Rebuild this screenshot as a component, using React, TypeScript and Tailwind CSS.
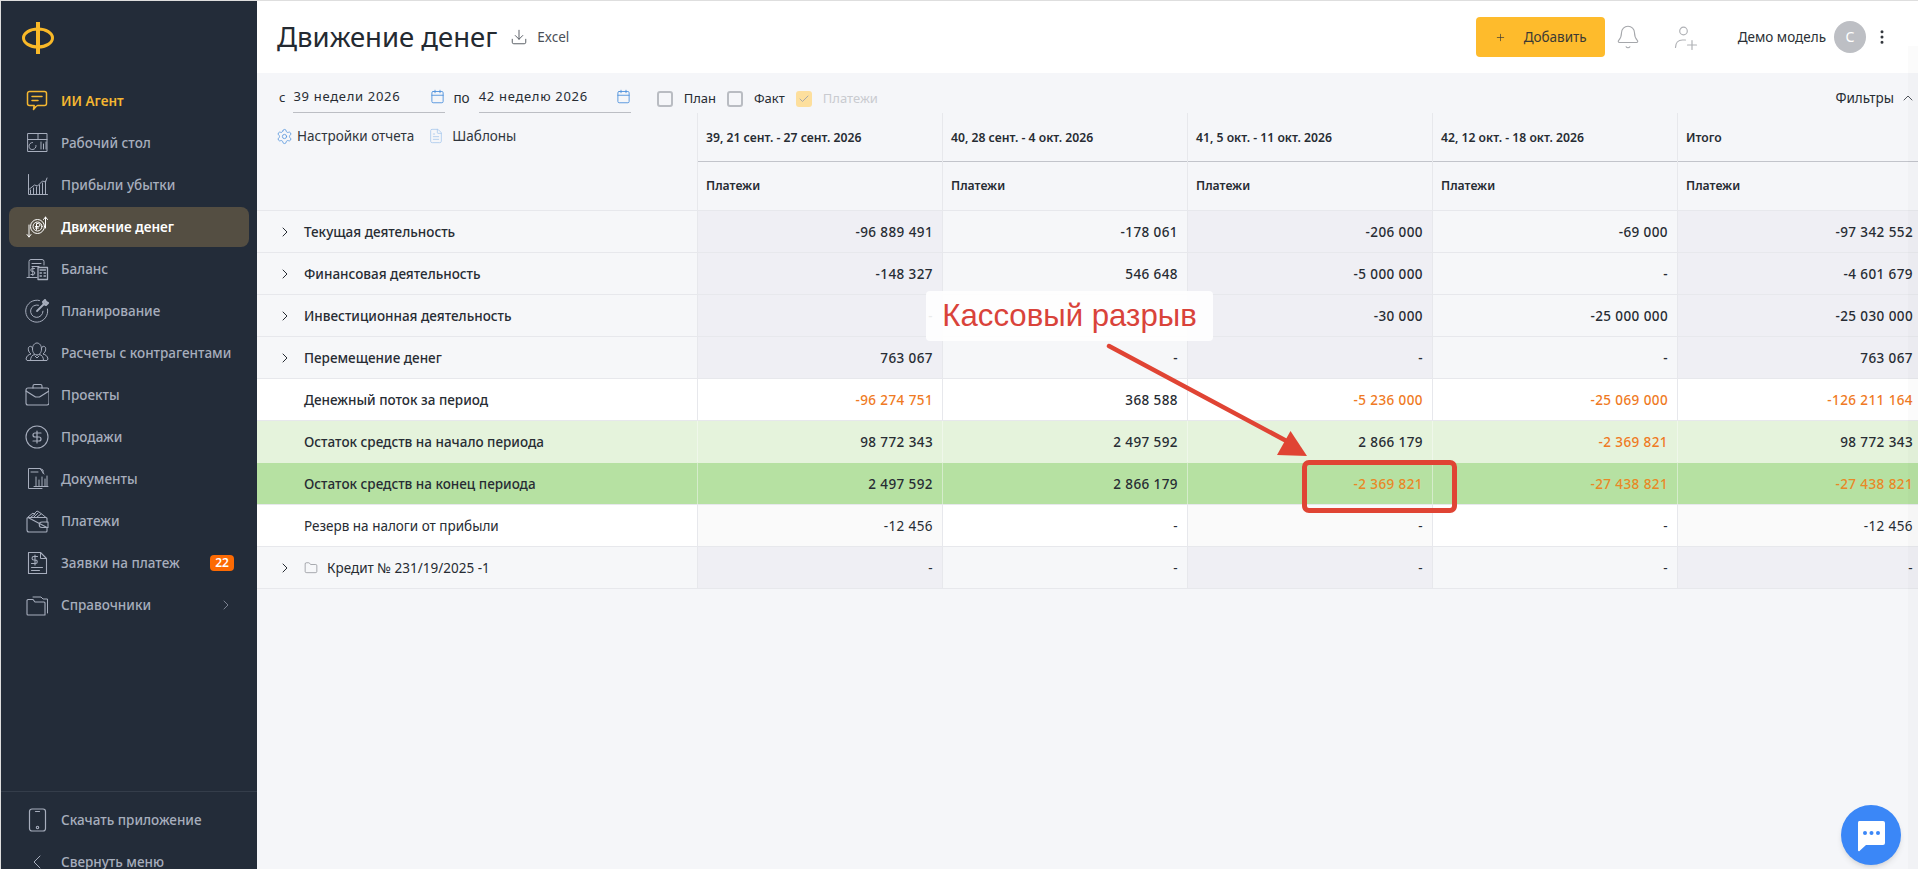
import { Bell, Calendar, Check, ChevronLeft, ChevronRight, ChevronUp, Download, EllipsisVertical, FileText, Folder, Plus, Settings } from "lucide-react";
import type { ReactNode } from "react";

const svg = (children: ReactNode) => (
  <svg viewBox="0 0 24 24" fill="none" stroke="currentColor" strokeWidth="1" strokeLinecap="round" strokeLinejoin="round" className="w-6 h-6">
    {children}
  </svg>
);

const icons: Record<string, ReactNode> = {
  agent: svg(
    <>
      <path strokeWidth="1.5" d="M4.500 2.500h15a2 2 0 0 1 2 2v10a2 2 0 0 1-2 2h-7l-1.500 1-2.500 3 .7-4H4.500a2 2 0 0 1-2-2v-10a2 2 0 0 1 2-2z" />
      <path strokeWidth="1.5" d="M7 7.500h10M7 11.500h6" />
    </>
  ),
  desk: svg(
    <>
      <path d="M3 2.500h19v18H3zM3 8.500h19M13 2.500v6M16 11v7M18.500 13v5M21 11v7" />
      <path d="M11 14.500a3.500 3.500 0 1 1-3.500-3" />
    </>
  ),
  profit: svg(
    <>
      <path d="M3.500 1.500v20h19M5.500 21v-4M8.500 21v-6M11.500 21v-7M14.500 21v-9M17.500 21v-11M20.500 21v-13" />
      <path d="M4.500 16l5-4 3 1 5-5 3 1 1.500-4" />
    </>
  ),
  money: svg(
    <>
      <circle cx="12.500" cy="11.500" r="7" />
      <circle cx="12.500" cy="11.500" r="4.500" />
      <path d="M11.500 14.500v-6h2a1.500 1.500 0 0 1 0 3h-3M10.500 13h3" />
      <path d="M20.500 13V2M18.500 4.500l2-2.500 2 2.500M4 10v12M2 19.500 4 22l2-2.500" />
    </>
  ),
  balance: svg(
    <>
      <path d="M4 20V4.500a2 2 0 0 1 2-2h11a2 2 0 0 1 2 2V8M2 20.500h10M7 6.500h9M7 9.500h7" />
      <path strokeWidth="1.300" d="M13 10.500h9.500v12H13zM15 13h5.500M15 16h1.500M19 16h1.500M15 19h1.500M19 19h1.500" />
      <path d="M9.500 11.500H7.300a1.200 1.200 0 0 0 0 3h1a1.200 1.200 0 0 1 0 3H6M7.800 10.500v8" />
    </>
  ),
  plan: svg(
    <>
      <path d="M14.500 1.500A11 11 0 1 0 22.500 10" />
      <path d="M13.500 6.200a6.200 6.200 0 1 0 4.500 6" />
      <path strokeWidth="1.800" d="M12 12 21 3" />
      <path strokeWidth="2" d="M18 3l2-2 1 2 2 1-2 2-2-1z" />
    </>
  ),
  partners: svg(
    <>
      <path d="M12 14c-2.500 0-4.500-2.500-4.500-6S9.500 2 12 2s4.500 2.500 4.500 6-2 6-4.500 6z" />
      <path d="M7.500 7c-.5-1.500-2-2-3-1.500C2.500 6.500 3 11 6 13c-2.500.5-4.500 2-5 5l1 1.500h20l1-1.500c-.5-3-2.500-4.500-5-5 3-2 3.500-6.500 1.500-7.500-1-.5-2.500 0-3 1.500" />
      <path d="M9.500 13.500c-2.500.5-4 2.500-4 6M14.500 13.500c2.500.5 4 2.500 4 6M10 15l2 2 2-2" />
    </>
  ),
  projects: svg(
    <>
      <rect x="1" y="5" width="23" height="17" rx="2" strokeWidth="1.100" />
      <path strokeWidth="1.100" d="M1 8l9.500 6h4L24 8M8 5V3a1.500 1.500 0 0 1 1.500-1.500h6A1.500 1.500 0 0 1 17 3v2" />
    </>
  ),
  sales: svg(
    <>
      <circle cx="12" cy="12" r="11" strokeWidth="1.100" />
      <path strokeWidth="1.200" d="M16 8h-6a2 2 0 1 0 0 4h4a2 2 0 1 1 0 4H8M12 18V6" />
    </>
  ),
  docs: svg(
    <>
      <path d="M18 6V3l-3-1.500H3.500v20H17" />
      <path d="M6 5h7M11 10v9M14 13v6M17 10v9M20 12v7M22 9v10M9 19.500h14M15 1.500 19 7" />
    </>
  ),
  pay: svg(
    <>
      <path strokeWidth="1.100" d="M3 8.500h18a1 1 0 0 1 1 1V13M22 18.500V22a1 1 0 0 1-1 1H4a2 2 0 0 1-2-2V9.500a1 1 0 0 1 1-1z" />
      <path strokeWidth="1.100" d="M17 13h6v5.500h-6a2.700 2.700 0 0 1 0-5.500z" />
      <path d="M3 8l5-4 1 1 3-3 2 1 4 3 3 2.500M6 8l4-3M9 8l4-4M12 8l4-3" />
    </>
  ),
  request: svg(
    <>
      <path strokeWidth="1.100" d="M3.500 1.500h12l6 6v15h-18z" />
      <path d="M15.500 1.500v6h6M6.500 16.500h11M6.500 19.500h8" />
      <path strokeWidth="1.100" d="M12.500 5.500H8.800a1.500 1.500 0 0 0 0 3.500h1.700a1.500 1.500 0 0 1 0 3.500H6.500M10 4v10" />
    </>
  ),
  dirs: svg(
    <>
      <path strokeWidth="1.100" d="M2 21V7.500a1 1 0 0 1 1-1h5l2 2.500h9a1 1 0 0 1 1 1V22H3a1 1 0 0 1-1-1z" />
      <path d="M8 4h8l2 2h4.500v14" />
    </>
  ),
  phone: svg(
    <>
      <rect x="4.500" y="1" width="16" height="22" rx="2.500" strokeWidth="1.200" />
      <path strokeWidth="1.200" d="M10.500 3.500h4" />
      <circle cx="12.500" cy="19.500" r="1.200" strokeWidth="1.100" />
    </>
  ),
};

const menu = [
  { key: "agent", label: "ИИ Агент" },
  { key: "desk", label: "Рабочий стол" },
  { key: "profit", label: "Прибыли убытки" },
  { key: "money", label: "Движение денег" },
  { key: "balance", label: "Баланс" },
  { key: "plan", label: "Планирование" },
  { key: "partners", label: "Расчеты с контрагентами" },
  { key: "projects", label: "Проекты" },
  { key: "sales", label: "Продажи" },
  { key: "docs", label: "Документы" },
  { key: "pay", label: "Платежи" },
  { key: "request", label: "Заявки на платеж" },
  { key: "dirs", label: "Справочники" },
];

const columns = ["39, 21 сент. - 27 сент. 2026", "40, 28 сент. - 4 окт. 2026", "41, 5 окт. - 11 окт. 2026", "42, 12 окт. - 18 окт. 2026", "Итого"];

type Row = { label: string; kind: "group" | "flow" | "start" | "end" | "tax" | "credit"; values: string[] };

const rows: Row[] = [
  { label: "Текущая деятельность", kind: "group", values: ["-96 889 491", "-178 061", "-206 000", "-69 000", "-97 342 552"] },
  { label: "Финансовая деятельность", kind: "group", values: ["-148 327", "546 648", "-5 000 000", "-", "-4 601 679"] },
  { label: "Инвестиционная деятельность", kind: "group", values: ["-", "", "-30 000", "-25 000 000", "-25 030 000"] },
  { label: "Перемещение денег", kind: "group", values: ["763 067", "-", "-", "-", "763 067"] },
  { label: "Денежный поток за период", kind: "flow", values: ["-96 274 751", "368 588", "-5 236 000", "-25 069 000", "-126 211 164"] },
  { label: "Остаток средств на начало периода", kind: "start", values: ["98 772 343", "2 497 592", "2 866 179", "-2 369 821", "98 772 343"] },
  { label: "Остаток средств на конец периода", kind: "end", values: ["2 497 592", "2 866 179", "-2 369 821", "-27 438 821", "-27 438 821"] },
  { label: "Резерв на налоги от прибыли", kind: "tax", values: ["-12 456", "-", "-", "-", "-12 456"] },
  { label: "Кредит № 231/19/2025 -1", kind: "credit", values: ["-", "-", "-", "-", "-"] },
];

function cellBg(kind: Row["kind"], col: number) {
  const odd = col % 2 === 0;
  if (kind === "group" || kind === "credit") return odd ? "bg-[#efeff4]" : "bg-[#f6f7f9]";
  if (kind === "flow") return "bg-white";
  if (kind === "start") return "bg-[#e5f3dc]";
  if (kind === "end") return "bg-[#b6e1a2]";
  return odd ? "bg-[#fafafa]" : "bg-white";
}

function labelBg(kind: Row["kind"]) {
  if (kind === "group" || kind === "credit") return "bg-[#f6f7f9]";
  if (kind === "start") return "bg-[#e5f3dc]";
  if (kind === "end") return "bg-[#b6e1a2]";
  return "bg-white";
}

function SideItem({ item }: { item: (typeof menu)[number] }) {
  const active = item.key === "money";
  const agent = item.key === "agent";
  return (
    <div className="h-[42px] px-2 flex items-center">
      <div
        className={`h-10 w-full pl-4 pr-3 flex items-center gap-3 rounded-lg ${
          active ? "bg-[#544e42] text-white font-semibold" : agent ? "text-[#f5b731] font-semibold" : "text-[#a7aebd] font-medium"
        }`}
      >
        <span className="w-6 shrink-0">{icons[item.key]}</span>
        <span className="flex-1 text-[13.5px] whitespace-nowrap">{item.label}</span>
        {item.key === "request" && (
          <span className="bg-[#fc6a03] text-white text-xs font-semibold rounded w-6 h-4 flex items-center justify-center mr-[3px]">22</span>
        )}
        {item.key === "dirs" && <ChevronRight className="w-4 h-4 mr-[3px]" strokeWidth={1} />}
      </div>
    </div>
  );
}

function CheckRow({ label, checked }: { label: string; checked?: boolean }) {
  return (
    <div className="flex items-center gap-[11px]">
      <span
        className={`w-4 h-4 rounded-[3px] flex items-center justify-center ${
          checked ? "bg-[#fddf9d]" : "border-2 border-[#b9bcc2]"
        }`}
      >
        {checked && <Check className="w-3 h-3 text-[#a9a9a9]" strokeWidth={2} />}
      </span>
      <span className={checked ? "text-[#c9cbd0]" : ""}>{label}</span>
    </div>
  );
}

function DateField({ value }: { value: string }) {
  return (
    <div className="w-[152px] h-[32px] mt-[8px] border-b border-[#bcbec4] flex items-center justify-between tracking-[0.7px]">
      <span>{value}</span>
      <Calendar className="w-[15px] h-[15px] text-[#4a8fdc]" strokeWidth={1.4} />
    </div>
  );
}

export default function App() {
  return (
    <div className="h-screen w-full overflow-hidden flex border-t border-l border-[#dedede] bg-[#f5f6f9] text-[#272c33] font-['Noto_Sans',sans-serif] relative">
      {/* Sidebar */}
      <aside className="w-[256px] shrink-0 bg-[#232c39] flex flex-col overflow-hidden">
        <div className="h-[790px] shrink-0">
          <div className="h-[79px] pl-[20px] pt-[21px]">
            <svg viewBox="0 0 34 32" className="w-[34px] h-8" fill="none" stroke="#f9b928">
              <ellipse cx="17" cy="16" rx="14.500" ry="9" strokeWidth="3" />
              <path d="M17 0v32" strokeWidth="4" />
            </svg>
          </div>
          {menu.map((item) => (
            <SideItem key={item.key} item={item} />
          ))}
        </div>
        <div className="border-t border-[#343d4a] pt-[7px] shrink-0 text-[#a7aebd] font-medium">
          <div className="h-[42px] px-6 flex items-center gap-3">
            <span className="w-6 shrink-0">{icons.phone}</span>
            <span className="text-[13.5px] whitespace-nowrap">Скачать приложение</span>
          </div>
          <div className="h-[42px] px-6 flex items-center gap-3">
            <ChevronLeft className="w-6 h-6 shrink-0" strokeWidth={1} />
            <span className="text-[13.5px] whitespace-nowrap">Свернуть меню</span>
          </div>
        </div>
      </aside>

      {/* Main */}
      <main className="flex-1 min-w-0 flex flex-col overflow-hidden">
        <header className="h-[72px] shrink-0 bg-white flex items-center pl-[20px]">
          <h1 className="text-[27.5px] leading-none text-[#242a31]">Движение денег</h1>
          <div className="ml-[13px] flex items-center gap-[9px] text-[13.5px] text-[#4a4f57]">
            <Download className="w-[18px] h-[18px]" strokeWidth={1.2} />
            Excel
          </div>
          <div className="ml-auto flex items-center">
            <button className="w-[129px] h-10 bg-[#febb2c] rounded text-[#3c3a34] text-[13.5px] flex items-center pl-[19px] gap-[18px]">
              <Plus className="w-[11px] h-[11px]" strokeWidth={1.5} />
              Добавить
            </button>
            <Bell className="ml-[10px] w-[26px] h-[26px] text-[#a5a7ab]" strokeWidth={1} />
            <svg viewBox="0 0 26 26" className="ml-[32px] w-[26px] h-[26px] text-[#b0b2b6]" fill="none" stroke="currentColor" strokeWidth="1.200" strokeLinecap="round">
              <circle cx="10.500" cy="7" r="3.800" />
              <path d="M2.500 23.500c0-4.500 2.500-7.500 7-7.500h3" />
              <path d="M19 16.500v9M14.500 21h9" />
            </svg>
            <span className="ml-[39px] text-[13.5px] text-[#2b2f35]">Демо модель</span>
            <span className="ml-[8px] w-8 h-8 rounded-full bg-[#bdbfc4] text-white text-sm flex items-center justify-center">С</span>
            <EllipsisVertical className="ml-[7px] mr-[27px] w-[18px] h-[18px] text-[#33373d]" strokeWidth={2} />
          </div>
        </header>

        <div className="h-[40px] shrink-0 flex items-start pl-[22px] pr-[2px] text-[13px]">
          <span className="mt-[15px] mr-[8px]">с</span>
          <DateField value="39 недели 2026" />
          <span className="mt-[15px] ml-2 mr-[9px] text-[13.5px]">по</span>
          <DateField value="42 неделю 2026" />
          <div className="mt-[16px] ml-[26px] flex items-center gap-[11px]">
            <CheckRow label="План" />
            <CheckRow label="Факт" />
            <CheckRow label="Платежи" checked />
          </div>
          <div className="mt-[15px] ml-auto flex items-center gap-[6px] text-[13.5px]">
            Фильтры
            <ChevronUp className="w-4 h-4" strokeWidth={1.2} />
          </div>
        </div>

        {/* Report table */}
        <div className="flex w-[1666px] border-b border-[#e7e8ec]">
          <div className="w-[440px] shrink-0 pl-[19px] pt-[15px] flex items-start text-[13.5px] text-[#30353c]">
            <Settings className="w-[17px] h-[17px] text-[#5b98dd]" strokeWidth={1.2} />
            <span className="ml-[4px] leading-4">Настройки отчета</span>
            <FileText className="ml-[14px] w-4 h-4 text-[#a6c6ec]" strokeWidth={1.2} />
            <span className="ml-[8px] leading-4">Шаблоны</span>
          </div>
          {columns.map((c) => (
            <div key={c} className="w-[245px] shrink-0 border-l border-[#e7e8ec] font-semibold text-[12.2px]">
              <div className="h-[49px] pl-2 pt-[3px] flex items-center border-b border-[#c2c4cb]">{c}</div>
              <div className="h-[48px] pl-2 pt-px flex items-center">Платежи</div>
            </div>
          ))}
        </div>

        {rows.map((row) => (
          <div key={row.label} className={`flex w-[1666px] h-[42px] shrink-0 text-[13.5px] border-b ${row.kind === "start" ? "border-[#e5f3dc]" : "border-[#e7e8ec]"}`}>
            <div
              className={`w-[440px] shrink-0 pt-px flex items-center ${labelBg(row.kind)} ${
                row.kind === "tax" || row.kind === "credit" ? "" : "font-medium"
              }`}
            >
              <span className="w-[47px] shrink-0 pl-[20px]">
                {(row.kind === "group" || row.kind === "credit") && <ChevronRight className="w-4 h-4" strokeWidth={1.5} />}
              </span>
              {row.kind === "credit" && <Folder className="w-[14px] h-[14px] mr-[9px] text-[#6e7278]" strokeWidth={1} />}
              <span>{row.label}</span>
            </div>
            {row.values.map((v, i) => {
              const negativeTotal = (row.kind === "flow" || row.kind === "start" || row.kind === "end") && v.startsWith("-");
              return (
                <div
                  key={i}
                  className={`w-[245px] shrink-0 pt-px flex items-center justify-end pr-[9px] tracking-[0.4px] border-l ${cellBg(row.kind, i)} ${
                    row.kind === "end" ? "border-[#d5eccb]" : row.kind === "start" ? "border-[#eff7ea]" : "border-[#e7e8ec]"
                  } ${negativeTotal ? (row.kind === "end" ? "text-[#e98826]" : "text-[#ef7a23]") : ""} ${row.kind === "tax" || row.kind === "credit" ? "" : "font-medium"}`}
                >
                  {v}
                </div>
              );
            })}
          </div>
        ))}
      </main>

      {/* Scrollbar track */}
      <div className="absolute right-0 top-[45px] bottom-0 w-[10px] bg-black/[0.015] pointer-events-none" />

      {/* Annotation */}
      <div className="absolute left-[925px] top-[290px] w-[287px] h-[50px] bg-white/90 rounded flex items-center justify-center text-[31.2px] text-[#d9433a] font-['Liberation_Sans',sans-serif]">
        Кассовый разрыв
      </div>
      <svg className="absolute left-0 top-0 w-[1918px] h-[869px] pointer-events-none" viewBox="0 0 1918 869" fill="none">
        <path d="M1108 345 1293 444" stroke="#e04434" strokeWidth="4.500" strokeLinecap="round" />
        <path d="M1306 455 1276 454 1289.500 430z" fill="#e04434" />
      </svg>
      <div className="absolute left-[1301px] top-[459px] w-[155px] h-[53px] border-[5px] border-[#e04434] rounded-[7px]" />

      {/* Chat button */}
      <div className="absolute right-[17px] bottom-[4px] w-[60px] h-[60px] rounded-full bg-[#3b87f7] shadow-md flex items-center justify-center">
        <svg viewBox="0 0 32 32" className="w-8 h-8 mt-px">
          <path d="M4 1h24a2 2 0 0 1 2 2v20a2 2 0 0 1-2 2H11l-6 5.500a1 1 0 0 1-2-.5V3a2 2 0 0 1 1-2z" fill="#fff" />
          <circle cx="10" cy="13" r="2" fill="#3b87f7" />
          <circle cx="16.500" cy="13" r="2" fill="#3b87f7" />
          <circle cx="23" cy="13" r="2" fill="#3b87f7" />
        </svg>
      </div>
    </div>
  );
}
